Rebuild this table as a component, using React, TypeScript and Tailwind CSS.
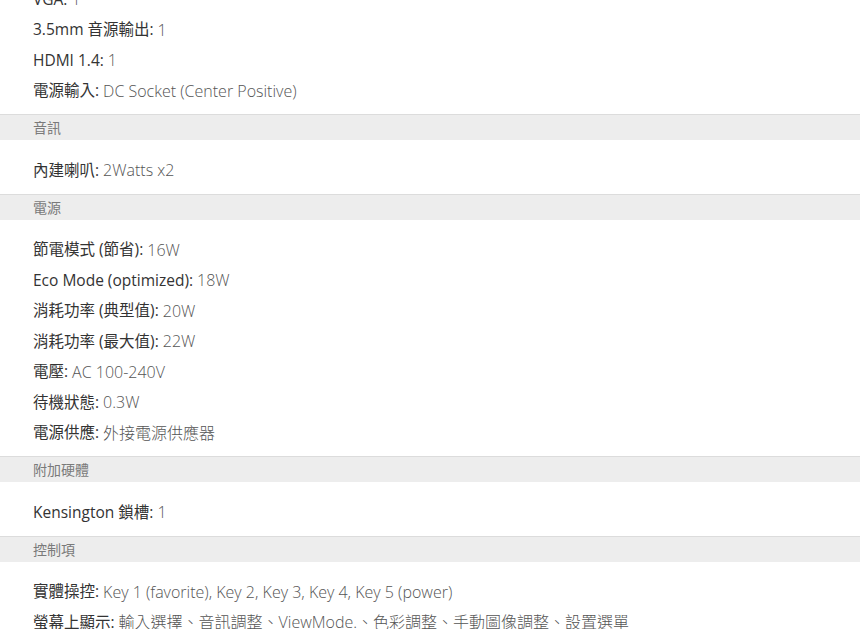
import React from "react";

type Section = {
  title?: string;
  rows: [string, string][];
};

const sections: Section[] = [
  {
    rows: [
      ["VGA", "1"],
      ["3.5mm 音源輸出", "1"],
      ["HDMI 1.4", "1"],
      ["電源輸入", "DC Socket (Center Positive)"],
    ],
  },
  {
    title: "音訊",
    rows: [["內建喇叭", "2Watts x2"]],
  },
  {
    title: "電源",
    rows: [
      ["節電模式 (節省)", "16W"],
      ["Eco Mode (optimized)", "18W"],
      ["消耗功率 (典型值)", "20W"],
      ["消耗功率 (最大值)", "22W"],
      ["電壓", "AC 100-240V"],
      ["待機狀態", "0.3W"],
      ["電源供應", "外接電源供應器"],
    ],
  },
  {
    title: "附加硬體",
    rows: [["Kensington 鎖槽", "1"]],
  },
  {
    title: "控制項",
    rows: [
      ["實體操控", "Key 1 (favorite), Key 2, Key 3, Key 4, Key 5 (power)"],
      ["螢幕上顯示", "輸入選擇、音訊調整、ViewMode.、色彩調整、手動圖像調整、設置選單"],
    ],
  },
];

const font = {
  fontFamily: '"Open Sans", "Noto Sans CJK TC", sans-serif',
};

const App = () => {
  return (
    <div className="w-[860px] h-[629px] overflow-hidden bg-white" style={font}>
      <div className="-mt-[16px]">
        {sections.map((s, i) => (
          <div key={i}>
            {s.title && (
              <div className="h-[26px] border-t border-[#dcdcdc] bg-[#ededed] pl-[33px] flex items-center text-[14px] text-[#7a7a7a]">
                {s.title}
              </div>
            )}
            <div className={s.title ? "pt-[15px] pb-[8px]" : "pb-[8px]"}>
              {s.rows.map(([label, value]) => (
                <div
                  key={label}
                  className="h-[30.5px] flex items-center pl-[33px] whitespace-nowrap"
                >
                  <span className="text-[15.5px] text-[#333]">{label}:</span>
                  <span className="ml-[4px] text-[16px] text-[#555] font-light">{value}</span>
                </div>
              ))}
            </div>
          </div>
        ))}
      </div>
    </div>
  );
};

export default App;
